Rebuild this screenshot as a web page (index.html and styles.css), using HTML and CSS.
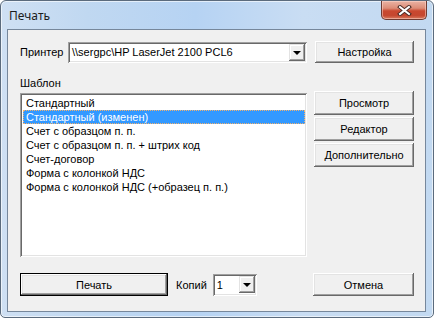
FILE: index.html
```html
<!DOCTYPE html>
<html lang="ru">
<head>
    <meta charset="UTF-8">
    <title>Печать</title>
    <link rel="stylesheet" href="styles.css">
</head>
<body>
    <div class="window">
        <div class="titlebar">
            <span class="title">Печать</span>
            <div class="close-btn">
                <svg width="15" height="11" viewBox="0 0 15 11">
                    <path d="M3 2 L12 9 M12 2 L3 9" stroke="#4a2a24" stroke-width="4" stroke-linecap="square"/>
                    <path d="M3 2 L12 9 M12 2 L3 9" stroke="#fff" stroke-width="2" stroke-linecap="square"/>
                </svg>
            </div>
        </div>

        <div class="client">
            <div class="printer-row">
                <label class="printer-label">Принтер</label>
                <div class="combo printer-combo">
                    <span class="combo-text">\\sergpc\HP LaserJet 2100 PCL6</span>
                    <div class="drop-btn"><span class="arrow"></span></div>
                </div>
                <div class="btn setup-btn">Настройка</div>
            </div>

            <div class="template-label">Шаблон</div>
            <div class="template-row">
                <ul class="listbox">
                    <li>Стандартный</li>
                    <li class="selected">Стандартный (изменен)</li>
                    <li>Счет с образцом п. п.</li>
                    <li>Счет с образцом п. п. + штрих код</li>
                    <li>Счет-договор</li>
                    <li>Форма с колонкой НДС</li>
                    <li>Форма с колонкой НДС (+образец п. п.)</li>
                </ul>
                <div class="side-buttons">
                    <div class="btn side-btn">Просмотр</div>
                    <div class="btn side-btn">Редактор</div>
                    <div class="btn side-btn">Дополнительно</div>
                </div>
            </div>

            <div class="bottom-row">
                <div class="btn default-btn print-btn">Печать</div>
                <label class="copies-label">Копий</label>
                <div class="combo copies-combo">
                    <span class="combo-text">1</span>
                    <div class="drop-btn"><span class="arrow"></span></div>
                </div>
                <div class="btn cancel-btn">Отмена</div>
            </div>
        </div>
    </div>
</body>
</html>
```

FILE: styles.css
```css
body {
    margin: 0;
    background: #fff;
    font-family: "Liberation Sans", Arial, sans-serif;
    font-size: 11px;
    color: #000;
}

.window {
    width: 434px;
    height: 318px;
    box-sizing: border-box;
    border: 1px solid #5b6b7d;
    border-radius: 6px 6px 5px 5px;
    background: linear-gradient(90deg, #cfe0f3 0%, #c0d8f1 20%, #b6d3f3 45%, #c9ddf3 70%, #c2d9f1 100%);
    box-shadow: inset 0 0 0 1px rgba(255, 255, 255, 0.6);
    display: flex;
    flex-direction: column;
}

.titlebar {
    height: 28px;
    display: flex;
    justify-content: space-between;
    align-items: flex-start;
    padding-left: 8px;
    padding-right: 6px;
}

.title {
    font-family: "Noto Sans", "Open Sans", sans-serif;
    font-size: 12px;
    line-height: 14px;
    margin-top: 8px;
    color: #1c1c1c;
}

.close-btn {
    width: 46px;
    height: 19px;
    box-sizing: border-box;
    border: 1px solid #6e3b32;
    border-top: none;
    border-radius: 0 0 5px 5px;
    background: linear-gradient(180deg, #eab3a4 0%, #dc8c77 40%, #c9482f 55%, #c5472f 80%, #d77a5e 100%);
    box-shadow: inset 0 0 0 1px rgba(255, 220, 210, 0.5);
    display: flex;
    align-items: center;
    justify-content: center;
}

.client {
    flex: 1;
    margin: 0 7px 5px 6px;
    border: 1px solid #76879b;
    background: #f0f0f0;
    padding: 11px 11px 0 12px;
}

.printer-row {
    display: flex;
    align-items: center;
    height: 22px;
}

.printer-label {
    width: 48px;
}

/* sunken 3d controls */
.combo,
.listbox {
    background: #fff;
    box-shadow: inset 1px 1px #a0a0a0, inset -1px -1px #fff, inset 2px 2px #696969, inset -2px -2px #e3e3e3;
}

.combo {
    box-sizing: border-box;
    height: 21px;
    display: flex;
    align-items: center;
    justify-content: space-between;
    padding: 2px;
}

.combo-text {
    padding-left: 2px;
    white-space: nowrap;
}

.printer-combo {
    width: 239px;
}

.drop-btn {
    width: 16px;
    height: 17px;
    box-sizing: border-box;
    background: #f0f0f0;
    box-shadow: inset -1px -1px #696969, inset 1px 1px #e3e3e3, inset -2px -2px #a0a0a0, inset 2px 2px #fff;
    display: flex;
    align-items: center;
    justify-content: center;
}

.arrow {
    width: 0;
    height: 0;
    border-left: 4px solid transparent;
    border-right: 4px solid transparent;
    border-top: 4px solid #000;
    margin-top: 1px;
}

/* raised buttons */
.btn {
    box-sizing: border-box;
    display: flex;
    align-items: center;
    justify-content: center;
    background: #f0f0f0;
    box-shadow: inset -1px -1px #696969, inset 1px 1px #fff, inset -2px -2px #a0a0a0, inset 2px 2px #e3e3e3;
}

.default-btn {
    box-shadow: inset 0 0 0 1px #000, inset -2px -2px #696969, inset 2px 2px #fff, inset -3px -3px #a0a0a0, inset 3px 3px #e3e3e3;
}

.setup-btn {
    width: 99px;
    height: 22px;
    margin-left: 8px;
}

.template-label {
    margin-top: 14px;
    line-height: 13px;
}

.template-row {
    display: flex;
    align-items: flex-start;
    margin-top: 1px;
}

.listbox {
    list-style: none;
    margin: 2px 0 0 0;
    padding: 3px 2px 0 3px;
    width: 287px;
    height: 164px;
    box-sizing: border-box;
}

.listbox li {
    height: 14px;
    line-height: 14px;
    padding-left: 3px;
    white-space: nowrap;
}

.listbox li.selected {
    background: #3399ff;
    color: #fff;
    outline: 1px dotted #f3b06a;
    outline-offset: -1px;
}

.side-buttons {
    display: flex;
    flex-direction: column;
    gap: 2px;
    margin-left: 7px;
}

.side-btn {
    width: 100px;
    height: 24px;
}

.bottom-row {
    display: flex;
    align-items: center;
    margin-top: 16px;
}

.print-btn {
    width: 148px;
    height: 23px;
}

.copies-label {
    margin-left: 8px;
}

.copies-combo {
    width: 44px;
    height: 22px;
    margin-left: 6px;
}

.cancel-btn {
    width: 101px;
    height: 23px;
    margin-left: auto;
}
```
